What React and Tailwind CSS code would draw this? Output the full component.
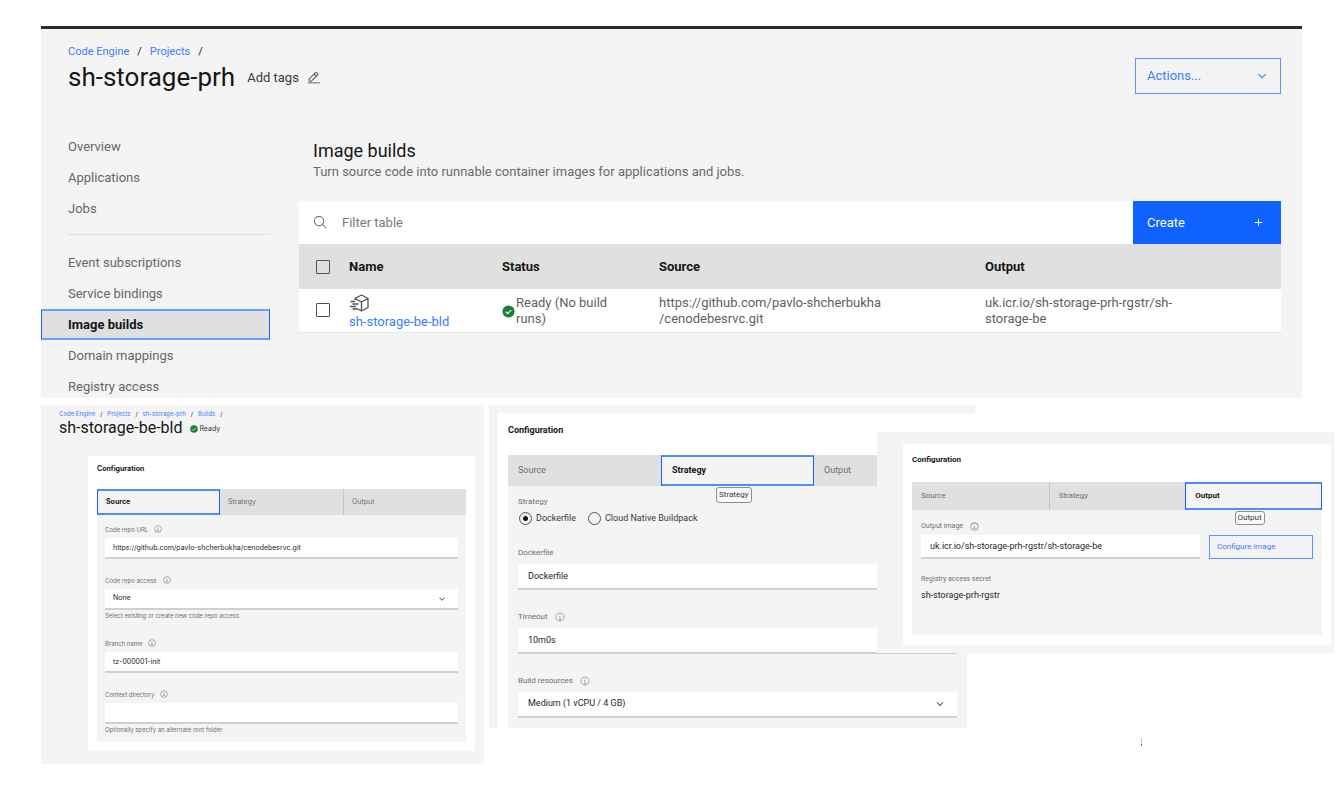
import React from "react";
import { clsx } from "clsx";

/* ---------- icons ---------- */

function Icon({ className, viewBox = "0 0 32 32", children }) {
  return (
    <svg className={clsx("shrink-0 fill-current", className)} viewBox={viewBox} aria-hidden="true">
      {children}
    </svg>
  );
}

const EditIcon = ({ className }) => (
  <Icon className={className}>
    <path d="M2 26h28v2H2zM25.4 9c.8-.8.8-2 0-2.8l-3.6-3.6c-.8-.8-2-.8-2.8 0l-15 15V24h6.4l15-15zm-5-5L24 7.600l-3 3L17.400 7l3-3zM6 22v-3.600l10-10 3.600 3.600-10 10H6z" />
  </Icon>
);

const SearchIcon = ({ className }) => (
  <Icon className={className}>
    <path d="M29 27.586l-7.552-7.552a11.018 11.018 0 1 0-1.414 1.414L27.586 29zM4 13a9 9 0 1 1 9 9 9.010 9.010 0 0 1-9-9z" />
  </Icon>
);

const ChevronIcon = ({ className }) => (
  <Icon className={className} viewBox="0 0 16 16">
    <path d="M8 11 3 6l.7-.7L8 9.600l4.300-4.300.7.7z" stroke="currentColor" strokeWidth="0.7" />
  </Icon>
);

const AddIcon = ({ className }) => (
  <Icon className={className}>
    <path d="M17 15V8h-2v7H8v2h7v7h2v-7h7v-2z" />
  </Icon>
);

const ReadyIcon = ({ className }) => (
  <Icon className={className} viewBox="0 0 16 16">
    <circle cx="8" cy="8" r="7.5" fill="#198038" />
    <path d="M4.600 8.200 7 10.600l4.400-4.400" fill="none" stroke="#fff" strokeWidth="1.400" />
  </Icon>
);

const InfoIcon = ({ className }) => (
  <Icon className={className}>
    <path d="M17 22v-8h-4v2h2v6h-3v2h8v-2zM16 8a1.500 1.500 0 1 0 1.500 1.500A1.500 1.500 0 0 0 16 8z" />
    <path d="M16 30a14 14 0 1 1 14-14 14 14 0 0 1-14 14zm0-26a12 12 0 1 0 12 12A12 12 0 0 0 16 4z" />
  </Icon>
);

const BuildIcon = ({ className }) => (
  <svg
    className={className}
    viewBox="0 0 20 18"
    fill="none"
    stroke="currentColor"
    strokeWidth="1.300"
    strokeLinejoin="round"
    aria-hidden="true"
  >
    <path d="M6 6V4.500L12.500 1 19 4.500v9L12.500 17 9.500 15.400M6 4.500 12.500 8 19 4.500M12.500 8v9" />
    <path d="M1.500 7.500h4.500M3.500 10h6M1 12.500h6M3.500 15h6" />
  </svg>
);

/* ---------- size variants of the build details ---------- */

const SMALL = {
  heading: "h-[26px] pt-[7px] text-[7px] leading-3",
  tabs: "mt-[7px] h-[26px] text-[7px]",
  tab: "px-2",
  body: "px-2 pt-2 pb-[6px] gap-[15px]",
  label: "h-3 gap-[6px] text-[6px]",
  info: "size-2",
  input: "mt-[3px] h-[21px] px-2 text-[7px]",
  helper: "h-3 text-[6px] leading-3",
};

const MEDIUM = {
  heading: "h-[34px] pt-[9px] text-[9px] leading-4",
  tabs: "mt-2 h-[31px] text-[9px]",
  tab: "px-[10px]",
  body: "px-[10px] pt-2 pb-[10px] gap-[19px]",
  label: "h-4 gap-[7px] text-[8px]",
  info: "size-[10px]",
  input: "mt-[3px] h-[26px] px-[10px] text-[9px]",
  tooltip: "h-4 px-[2px] text-[8px]",
};

const COMPACT = {
  heading: "h-[30px] pt-2 text-[8px] leading-4",
  tabs: "mt-2 h-[28px] text-[8px]",
  tab: "px-[9px]",
  body: "px-[9px] pt-[10px] pb-[10px]",
  label: "h-3 gap-[7px] text-[7px]",
  info: "size-[9px]",
  input: "mt-[3px] h-[24px] px-[9px] text-[9px]",
  tooltip: "h-[14px] px-[2px] text-[8px]",
};

function Breadcrumb({ items, className }) {
  return (
    <nav aria-label="Breadcrumb">
      <ol className={clsx("flex", className)}>
        {items.map((item) => (
          <li key={item} className="flex gap-[inherit]">
            <a href="#" className="text-[#3b7dff]">{item}</a>
            <span>/</span>
          </li>
        ))}
      </ol>
    </nav>
  );
}

function Tabs({ size, selected, tooltip }) {
  const names = ["Source", "Strategy", "Output"];
  return (
    <div role="tablist" className={clsx("grid grid-cols-3 bg-[#e0e0e0]", size.tabs)}>
      {names.map((name, i) => {
        const on = name === selected;
        const divided = i > 0 && !on && names[i - 1] !== selected;
        return (
          <div key={name} className="relative flex">
            <button
              type="button"
              role="tab"
              aria-selected={on}
              className={clsx(
                "flex flex-1 items-center text-left",
                size.tab,
                on
                  ? "border-x border-y-2 border-x-[#0f62fe] border-y-[#4f8dff] bg-[#f4f4f4] font-bold text-[#161616]"
                  : "text-[#6f6f6f]",
                divided && "border-l border-[#c6c6c6]"
              )}
            >
              {name}
            </button>
            {on && tooltip && (
              <span
                role="tooltip"
                className={clsx(
                  "absolute top-full left-[36%] mt-px flex items-center rounded-[3px] border border-[#8d8d8d] bg-[#f9f9f9] text-[#393939]",
                  size.tooltip
                )}
              >
                {name}
              </span>
            )}
          </div>
        );
      })}
    </div>
  );
}

function FieldLabel({ size, id, info, children }) {
  return (
    <div className={clsx("flex items-center text-[#6f6f6f]", size.label)}>
      <label htmlFor={id}>{children}</label>
      {info && (
        <button type="button" aria-label={`About ${children}`} className="flex">
          <InfoIcon className={size.info} />
        </button>
      )}
    </div>
  );
}

const inputLook = "block w-full rounded-none border-b-2 border-[#cfcfcf] bg-white text-[#262626] outline-none";

function TextField({ size, id, label, info, value, helper }) {
  return (
    <div>
      <FieldLabel size={size} id={id} info={info}>{label}</FieldLabel>
      <input id={id} type="text" defaultValue={value} className={clsx(inputLook, size.input)} />
      {helper && <p className={clsx("text-[#6f6f6f]", size.helper)}>{helper}</p>}
    </div>
  );
}

function SelectField({ size, id, label, value, helper }) {
  return (
    <div>
      <FieldLabel size={size} id={id} info>{label}</FieldLabel>
      <div className="relative">
        <select id={id} defaultValue={value} className={clsx(inputLook, "appearance-none", size.input)}>
          <option>{value}</option>
        </select>
        <span className="pointer-events-none absolute inset-0 flex items-center justify-end pr-3 pb-[2px] text-[#525252]">
          <ChevronIcon className={size.info} />
        </span>
      </div>
      {helper && <p className={clsx("text-[#6f6f6f]", size.helper)}>{helper}</p>}
    </div>
  );
}

/* ---------- project page ---------- */

function NavItem({ children, selected }) {
  return (
    <li>
      <a
        href="#"
        aria-current={selected ? "page" : undefined}
        className={clsx(
          "flex h-[31px] items-center",
          selected
            ? "border-x border-y-2 border-x-[#0f62fe] border-y-[#6b9fff] bg-[#e0e0e0] pl-[26px] font-bold text-[#161616]"
            : "pl-[27px] text-[#666666]"
        )}
      >
        {children}
      </a>
    </li>
  );
}

const checkbox = "block size-[14px] appearance-none rounded-[1px] border border-[#525252]";

function BuildsTable() {
  return (
    <table className="w-full table-fixed text-left text-[13px] leading-4">
      <colgroup>
        <col className="w-[50px]" />
        <col className="w-[153px]" />
        <col className="w-[157px]" />
        <col className="w-[33.2%]" />
        <col />
      </colgroup>
      <thead>
        <tr className="h-[45px] bg-[#e0e0e0] text-[#161616]">
          <th className="pl-[17px]">
            <input type="checkbox" aria-label="Select all builds" className={checkbox} />
          </th>
          <th>Name</th>
          <th>Status</th>
          <th>Source</th>
          <th>Output</th>
        </tr>
      </thead>
      <tbody>
        <tr className="h-[43px] border-b border-[#e8e8e8] bg-white text-[#5f5f5f]">
          <td className="pl-[17px]">
            <input type="checkbox" aria-label="Select sh-storage-be-bld" className={checkbox} />
          </td>
          <td className="pt-1">
            <BuildIcon className="h-[18px] w-5 text-[#525252]" />
            <a href="#" className="mt-[2px] block text-[#3b7dff]">sh-storage-be-bld</a>
          </td>
          <td className="pt-[2px]">
            <span className="flex items-center gap-px pr-8">
              <ReadyIcon className="size-[13px]" />
              <span>Ready (No build runs)</span>
            </span>
          </td>
          <td className="pt-[2px]">https://github.com/pavlo-shcherbukha<br />/cenodebesrvc.git</td>
          <td className="pt-[2px]">uk.icr.io/sh-storage-prh-rgstr/sh-<br />storage-be</td>
        </tr>
      </tbody>
    </table>
  );
}

function ProjectPanel() {
  return (
    <section className="mr-8 border-t-3 border-[#2b2b2b] bg-[#f4f4f4]">
      <header className="flex items-start justify-between pt-[15px] pr-[21px] pl-[27px]">
        <div>
          <Breadcrumb items={["Code Engine", "Projects"]} className="gap-2 text-[11px] leading-4" />
          <div className="flex items-center gap-3">
            <h1 className="text-[26px] leading-[34px] text-[#161616]">sh-storage-prh</h1>
            <div className="flex items-center gap-2 pt-[2px] text-[13px] text-[#393939]">
              Add tags
              <button type="button" aria-label="Edit tags">
                <EditIcon className="size-[14px]" />
              </button>
            </div>
          </div>
        </div>
        <button
          type="button"
          className="mt-[14px] flex h-9 w-[146px] items-center justify-between border border-[#5c95ff] pr-3 pl-[11px] text-[13px] text-[#3b7dff]"
        >
          Actions...
          <ChevronIcon className="size-3" />
        </button>
      </header>

      <div className="mt-9 flex gap-[29px] pr-[21px]">
        <nav aria-label="Project" className="-mb-1 w-[229px] shrink-0 pt-px text-[13px]">
          <ul>
            <NavItem>Overview</NavItem>
            <NavItem>Applications</NavItem>
            <NavItem>Jobs</NavItem>
          </ul>
          <hr className="mt-[10px] mb-3 ml-[27px] border-[#e0e0e0]" />
          <ul>
            <NavItem>Event subscriptions</NavItem>
            <NavItem>Service bindings</NavItem>
            <NavItem selected>Image builds</NavItem>
            <NavItem>Domain mappings</NavItem>
            <NavItem>Registry access</NavItem>
          </ul>
        </nav>

        <main className="min-w-0 flex-1 pt-[9px]">
          <h2 className="pl-[14px] text-[18px] leading-6 text-[#161616]">Image builds</h2>
          <p className="pl-[14px] text-[13px] leading-[18px] text-[#6a6a6a]">
            Turn source code into runnable container images for applications and jobs.
          </p>
          <div className="mt-5 flex h-[43px] bg-white">
            <label htmlFor="filter" className="flex items-center pr-[14px] pl-[14px] text-[#6f6f6f]">
              <SearchIcon className="size-[15px]" />
            </label>
            <input
              id="filter"
              type="search"
              placeholder="Filter table"
              className="min-w-0 flex-1 text-[13px] outline-none placeholder:text-[#7a7a7a]"
            />
            <button
              type="button"
              className="flex w-[148px] items-center justify-between bg-[#0f62fe] pr-[15px] pl-[14px] text-[13px] text-white"
            >
              Create
              <AddIcon className="size-[15px]" />
            </button>
          </div>
          <BuildsTable />
        </main>
      </div>
    </section>
  );
}

/* ---------- build details ---------- */

function SourcePanel() {
  const size = SMALL;
  return (
    <section className="mr-[5px] bg-[#f4f4f4] pr-[9px] pb-[13px]">
      <header className="pt-1 pl-[18px]">
        <Breadcrumb
          items={["Code Engine", "Projects", "sh-storage-prh", "Builds"]}
          className="gap-[5px] font-[Inter,sans-serif] text-[6px] leading-[10px]"
        />
        <div className="flex items-center gap-2">
          <h2 className="text-[16px] leading-[18px] text-[#161616]">sh-storage-be-bld</h2>
          <span className="flex items-center gap-px pt-[2px] font-[Inter,sans-serif] text-[7px] text-[#393939]">
            <ReadyIcon className="size-2" />
            Ready
          </span>
        </div>
      </header>
      <div className="mt-[19px] ml-[47px] bg-white px-[9px] pb-[9px] font-[Inter,sans-serif]">
        <h3 className={clsx("font-bold text-[#161616]", size.heading)}>Configuration</h3>
        <Tabs size={size} selected="Source" />
        <div className={clsx("flex flex-col bg-[#f4f4f4]", size.body)}>
          <TextField size={size} id="repo" label="Code repo URL" info value="https://github.com/pavlo-shcherbukha/cenodebesrvc.git" />
          <SelectField size={size} id="access" label="Code repo access" value="None" helper="Select existing or create new code repo access" />
          <TextField size={size} id="branch" label="Branch name" info value="tz-000001-init" />
          <TextField size={size} id="context" label="Context directory" info value="" helper="Optionally specify an alternate root folder" />
        </div>
      </div>
    </section>
  );
}

const radio =
  "grid size-[13px] appearance-none place-items-center rounded-full border border-[#525252] checked:after:size-[5px] checked:after:rounded-full checked:after:bg-[#161616] checked:after:content-['']";

function StrategyPanel() {
  const size = MEDIUM;
  return (
    <section className="-mr-[98px] bg-[#f4f4f4] pt-2 pl-[9px]">
      <div className="bg-white pr-2 pl-[10px]">
        <h3 className={clsx("font-bold text-[#161616]", size.heading)}>Configuration</h3>
        <Tabs size={size} selected="Strategy" tooltip />
        <div className={clsx("flex flex-col bg-[#f4f4f4]", size.body)}>
          <fieldset>
            <legend className="text-[8px] leading-4 text-[#6f6f6f]">Strategy</legend>
            <div className="flex gap-3 pl-px text-[9px] leading-4 text-[#393939]">
              <label className="flex items-center gap-1">
                <input type="radio" name="strategy" defaultChecked className={radio} />
                Dockerfile
              </label>
              <label className="flex items-center gap-1">
                <input type="radio" name="strategy" className={radio} />
                Cloud Native Buildpack
              </label>
            </div>
          </fieldset>
          <TextField size={size} id="dockerfile" label="Dockerfile" value="Dockerfile" />
          <TextField size={size} id="timeout" label="Timeout" info value="10m0s" />
          <SelectField size={size} id="resources" label="Build resources" value="Medium (1 vCPU / 4 GB)" />
        </div>
      </div>
    </section>
  );
}

function OutputPanel() {
  const size = COMPACT;
  return (
    <div className="z-10 mt-[27px]">
      <section className="bg-[#f4f4f4] pt-3 pr-[3px] pb-2 pl-[26px]">
        <div className="bg-white px-[9px] pb-[10px]">
          <h3 className={clsx("font-bold text-[#161616]", size.heading)}>Configuration</h3>
          <Tabs size={size} selected="Output" tooltip />
          <div className={clsx("min-h-[125px] bg-[#f4f4f4]", size.body)}>
            <div className="flex items-end gap-[9px]">
              <div className="flex-1">
                <TextField size={size} id="image" label="Output image" info value="uk.icr.io/sh-storage-prh-rgstr/sh-storage-be" />
              </div>
              <button type="button" className="h-6 w-[104px] border border-[#5c95ff] px-[7px] text-left text-[8px] text-[#3b7dff]">
                Configure image
              </button>
            </div>
            <dl className="mt-3 leading-4">
              <dt className="text-[7px] text-[#6f6f6f]">Registry access secret</dt>
              <dd className="text-[9px] text-[#262626]">sh-storage-prh-rgstr</dd>
            </dl>
          </div>
        </div>
      </section>
      <div className="mt-[85px] ml-[264px] h-2 w-px border-b-2 border-[#777777] bg-[#c8c8c8]" />
    </div>
  );
}

export default function App() {
  return (
    <div className="min-h-screen bg-white pt-[26px] pr-[5px] pb-8 pl-[41px] font-[Roboto,sans-serif] text-[#161616]">
      <ProjectPanel />
      <div className="mt-[7px] grid grid-cols-[448fr_388fr_457fr] items-start">
        <SourcePanel />
        <StrategyPanel />
        <OutputPanel />
      </div>
    </div>
  );
}
